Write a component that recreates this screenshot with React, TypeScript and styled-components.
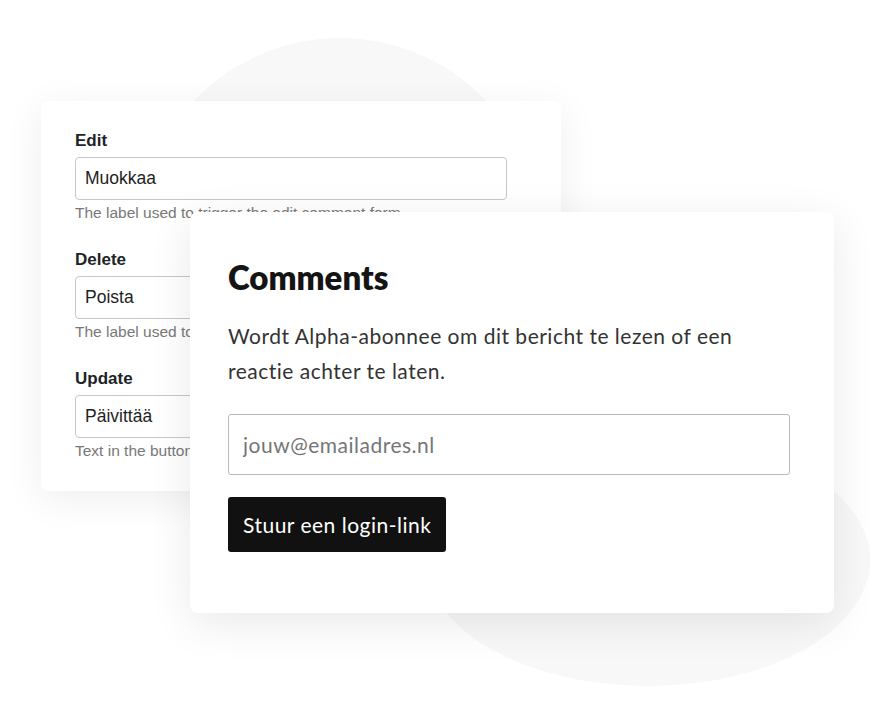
import React from 'react';
import styled, { createGlobalStyle } from 'styled-components';

const GlobalStyle = createGlobalStyle`
  html, body {
    margin: 0;
    padding: 0;
    background: #fff;
  }
  * {
    box-sizing: border-box;
  }
`;

const Stage = styled.main`
  position: relative;
  width: 896px;
  height: 728px;
  overflow: hidden;
  background: #fff;
  display: grid;
  grid-template-columns: 41px 149px 371px 273px 1fr;
  grid-template-rows: 101px 111px 279px 122px 1fr;
`;

// decorative blobs behind the cards
const Blob = styled.div<{ $left: number; $top: number; $w: number; $h: number }>`
  position: absolute;
  left: ${p => p.$left}px;
  top: ${p => p.$top}px;
  width: ${p => p.$w}px;
  height: ${p => p.$h}px;
  border-radius: 50%;
  background: #f8f8f8;
  z-index: 0;
`;

const SettingsCard = styled.section`
  grid-column: 2 / 4;
  grid-row: 2 / 4;
  z-index: 1;
  background: #fff;
  border-radius: 8px;
  box-shadow: 0 8px 40px rgba(0, 0, 0, 0.07);
  padding: 29px 54px 0 34px;
  overflow: hidden;
  font-family: "Liberation Sans", Arial, sans-serif;
  display: flex;
  flex-direction: column;
  gap: 27px;
`;

const Field = styled.div`
  display: flex;
  flex-direction: column;
`;

const FieldLabel = styled.label`
  font-size: 17px;
  line-height: 22px;
  font-weight: 700;
  color: #1d2327;
  margin-bottom: 5px;
`;

const TextBox = styled.input`
  width: 432px;
  height: 43px;
  border: 1px solid #c8c8c8;
  border-radius: 4px;
  padding: 0 9px;
  font-family: "Liberation Sans", Arial, sans-serif;
  font-size: 17.5px;
  color: #1e1e1e;
  background: #fff;
  outline: none;
`;

const Help = styled.p`
  margin: 4px 0 0;
  font-size: 15.5px;
  line-height: 18px;
  color: #787878;
  white-space: nowrap;
`;

const CommentsCard = styled.section`
  grid-column: 3 / 5;
  grid-row: 3 / 5;
  z-index: 2;
  background: #fff;
  border-radius: 8px;
  box-shadow: 0 10px 44px rgba(0, 0, 0, 0.09);
  padding: 46px 44px 0 38px;
  font-family: Lato, "Noto Sans", sans-serif;
  display: flex;
  flex-direction: column;
  align-items: flex-start;
`;

const Title = styled.h2`
  margin: 0;
  font-size: 33px;
  line-height: 38px;
  font-weight: 800;
  color: #141414;
`;

const Intro = styled.p`
  margin: 22px 0 0;
  font-size: 21px;
  line-height: 35px;
  letter-spacing: 0.5px;
  color: #333;
  max-width: 530px;
`;

const EmailInput = styled.input`
  margin-top: 26px;
  width: 562px;
  height: 61px;
  border: 1px solid #b9b9b9;
  border-radius: 3px;
  padding: 0 14px;
  font-family: Lato, "Noto Sans", sans-serif;
  font-size: 21px;
  letter-spacing: 0.5px;
  color: #222;
  outline: none;
  &::placeholder {
    color: #767676;
  }
`;

const SendButton = styled.button`
  margin-top: 22px;
  height: 55px;
  padding: 0 15px;
  border: none;
  border-radius: 3px;
  background: #111;
  color: #fff;
  font-family: Lato, "Noto Sans", sans-serif;
  font-size: 21px;
  letter-spacing: 0.5px;
  cursor: pointer;
`;

const fields = [
  { label: 'Edit', value: 'Muokkaa', help: 'The label used to trigger the edit comment form.' },
  { label: 'Delete', value: 'Poista', help: 'The label used to trigger the delete comment form.' },
  { label: 'Update', value: 'Päivittää', help: 'Text in the button to update a comment.' },
];

const App = () => {
  return (
    <>
      <GlobalStyle />
      <Stage>
        <Blob $left={139} $top={38} $w={402} $h={402} />
        <Blob $left={426} $top={434} $w={444} $h={252} />

        <SettingsCard>
          {fields.map(f => (
            <Field key={f.label}>
              <FieldLabel>{f.label}</FieldLabel>
              <TextBox readOnly defaultValue={f.value} />
              <Help>{f.help}</Help>
            </Field>
          ))}
        </SettingsCard>

        <CommentsCard>
          <Title>Comments</Title>
          <Intro>Wordt Alpha-abonnee om dit bericht te lezen of een reactie achter te laten.</Intro>
          <EmailInput type="email" placeholder="jouw@emailadres.nl" />
          <SendButton>Stuur een login-link</SendButton>
        </CommentsCard>
      </Stage>
    </>
  );
};

export default App;
